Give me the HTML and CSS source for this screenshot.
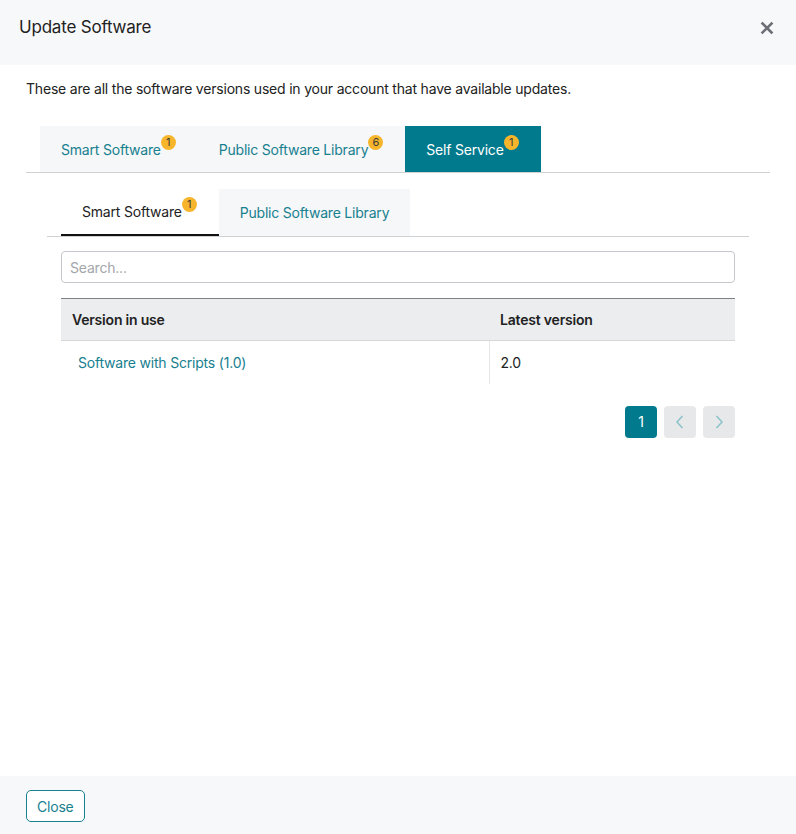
FILE: index.html
```html
<!DOCTYPE html>
<html>
<head>
<meta charset="utf-8">
<link rel="stylesheet" href="styles.css">
</head>
<body>
<div class="modal">
  <header class="modal-header">
    <h1 class="modal-title">Update Software</h1>
    <button class="close-x" aria-label="Close">
      <svg width="14" height="14" viewBox="0 0 14 14"><path d="M2.5 2.5 L11.5 11.5 M11.5 2.5 L2.5 11.5" stroke="#6c7076" stroke-width="2.6" stroke-linecap="square"/></svg>
    </button>
  </header>
  <main class="modal-body">
    <p class="intro">These are all the software versions used in your account that have available updates.</p>
    <div class="outer-tabs">
      <div class="otab">Smart Software<span class="badge">1</span></div>
      <div class="otab">Public Software Library<span class="badge">6</span></div>
      <div class="otab active">Self Service<span class="badge">1</span></div>
    </div>
    <section class="panel">
      <div class="inner-tabs">
        <div class="itab active">Smart Software<span class="badge">1</span></div>
        <div class="itab">Public Software Library</div>
      </div>
      <div class="panel-content">
        <input class="search" type="text" placeholder="Search...">
        <table class="grid">
          <thead>
            <tr><th class="c1">Version in use</th><th>Latest version</th></tr>
          </thead>
          <tbody>
            <tr><td class="c1"><a href="#">Software with Scripts (1.0)</a></td><td>2.0</td></tr>
          </tbody>
        </table>
        <div class="pager">
          <button class="pg current">1</button>
          <button class="pg"><svg width="10" height="16" viewBox="0 0 10 16"><path d="M7.5 2 L2 8 L7.5 14" fill="none" stroke="#8cc2cb" stroke-width="1.5"/></svg></button>
          <button class="pg"><svg width="10" height="16" viewBox="0 0 10 16"><path d="M2.5 2 L8 8 L2.5 14" fill="none" stroke="#8cc2cb" stroke-width="1.5"/></svg></button>
        </div>
      </div>
    </section>
  </main>
  <footer class="modal-footer">
    <button class="btn-close">Close</button>
  </footer>
</div>
</body>
</html>
```
FILE: styles.css
```css
* { box-sizing: border-box; }
html, body { margin: 0; padding: 0; }
body {
  font-family: Inter, "Noto Sans", sans-serif;
  color: #222;
  background: #fff;
  letter-spacing: -0.2px;
}
.modal {
  display: flex;
  flex-direction: column;
  height: 834px;
  width: 796px;
}
.modal-header {
  height: 65px;
  background: #f7f8fa;
  display: flex;
  align-items: flex-start;
  justify-content: space-between;
  padding: 16px 22px 0 19px;
}
.modal-title {
  margin: 0;
  font-size: 17px;
  font-weight: 400;
  line-height: 22px;
  color: #222;
  letter-spacing: -0.2px;
}
.close-x {
  border: 0;
  background: none;
  padding: 0;
  margin-top: 5px;
  width: 14px;
  height: 14px;
  display: flex;
}
.modal-body {
  flex: 1;
  padding: 0 26px;
}
.intro {
  margin: 15px 0 0;
  font-size: 14px;
  line-height: 18px;
  color: #222;
}
.outer-tabs {
  display: flex;
  margin-top: 28px;
  padding-left: 14px;
  border-bottom: 1px solid #cfd2d5;
}
.otab {
  height: 46px;
  display: flex;
  align-items: center;
  padding: 0 22px 0 21px;
  background: #f5f7f9;
  color: #18808f;
  font-size: 14px;
  position: relative;
}
.otab.active {
  background: #007a8c;
  color: #fff;
}
.badge {
  display: inline-flex;
  align-items: center;
  justify-content: center;
  width: 15px;
  height: 15px;
  border-radius: 50%;
  background: #f7b52c;
  color: #3a3a3a;
  font-size: 11px;
  letter-spacing: 0;
  line-height: 1;
  margin-left: 0;
  position: relative;
  top: -7px;
}
.panel {
  margin: 16px 21px 0;
}
.inner-tabs {
  display: flex;
  padding-left: 14px;
  border-bottom: 1px solid #cfd2d5;
}
.itab {
  height: 47px;
  display: flex;
  align-items: center;
  padding: 0 21px 0 21px;
  background: #f5f7f9;
  color: #18808f;
  font-size: 14px;
}
.itab.active {
  background: #fff;
  color: #222;
  border-bottom: 2px solid #111;
  padding-right: 22px;
}
.panel-content {
  padding: 14px 14px 0;
}
.search {
  display: block;
  width: 100%;
  height: 32px;
  border: 1px solid #c4c7cb;
  border-radius: 4px;
  padding: 0 8px;
  font-family: Inter, "Noto Sans", sans-serif;
  font-size: 14px;
  letter-spacing: -0.2px;
  color: #222;
}
.search::placeholder { color: #a3a6aa; }
.grid {
  width: 100%;
  margin-top: 15px;
  border-collapse: collapse;
  font-size: 14px;
}
.grid th {
  background: #ebedef;
  border-top: 1px solid #7d8186;
  border-bottom: 1px solid #d5d8db;
  text-align: left;
  font-weight: 600;
  height: 42px;
  padding: 0 11px;
  color: #222;
}
.grid th.c1 { width: 428px; padding-left: 11px; }
.grid td {
  height: 43px;
  padding: 0 11px;
  vertical-align: middle;
  color: #222;
}
.grid td.c1 {
  border-right: 1px solid #e4e6e8;
  padding-left: 17px;
}
.grid a {
  color: #18808f;
  text-decoration: none;
}
.pager {
  display: flex;
  justify-content: flex-end;
  gap: 7px;
  margin-top: 22px;
}
.pg {
  width: 32px;
  height: 32px;
  border: 0;
  border-radius: 4px;
  background: #e6e8ea;
  display: flex;
  align-items: center;
  justify-content: center;
  padding: 0;
  font-family: Inter, sans-serif;
  font-size: 14px;
}
.pg.current {
  background: #007a8c;
  color: #fff;
}
.modal-footer {
  height: 58px;
  background: #f7f8fa;
  padding: 14px 26px 0;
}
.btn-close {
  height: 32px;
  padding: 0 10px;
  border: 1px solid #18808f;
  border-radius: 5px;
  background: #fff;
  color: #18808f;
  font-family: Inter, sans-serif;
  font-size: 14px;
  letter-spacing: -0.2px;
}
```
